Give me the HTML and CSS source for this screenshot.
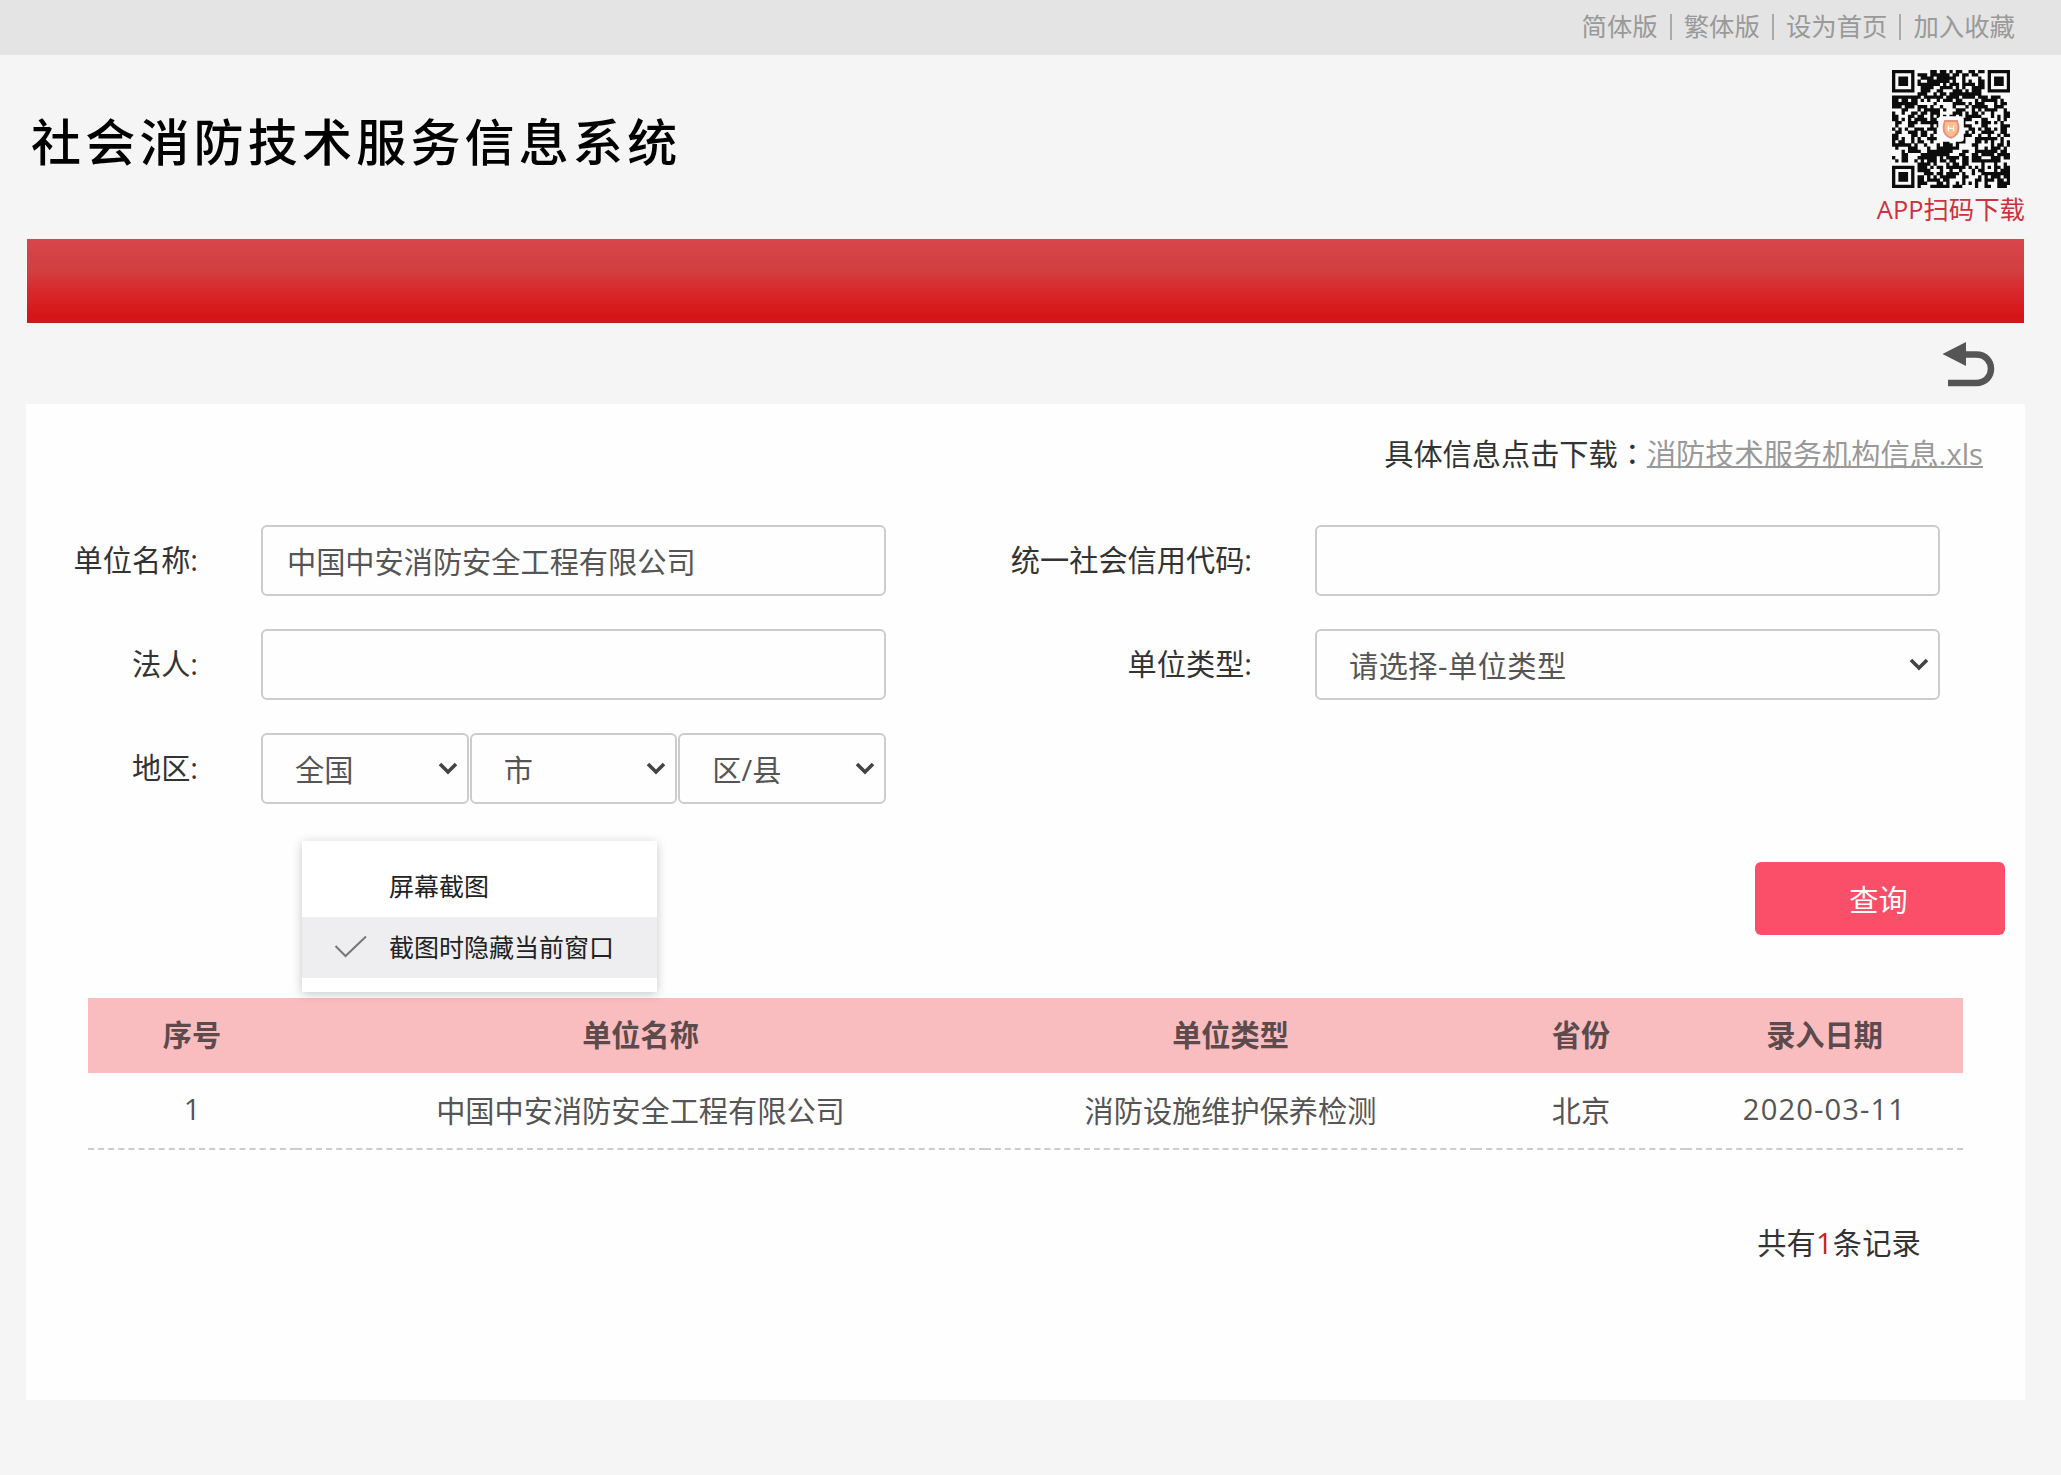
FILE: index.html
```
<!DOCTYPE html>
<html lang="zh-CN">
<head>
    <meta charset="UTF-8">
    <meta name="viewport" content="width=device-width, initial-scale=1.0">
    <title>社会消防技术服务信息系统</title>
    <link rel="stylesheet" href="styles.css">
</head>
<body>
    <div class="top-bar">
        <a>简体版</a><i></i><a>繁体版</a><i></i><a>设为首页</a><i></i><a>加入收藏</a>
    </div>

    <div class="header">
        <h1>社会消防技术服务信息系统</h1>
        <div class="app-code">
            <svg class="qr" id="qr" viewBox="0 0 37 37"></svg>
            <span>APP扫码下载</span>
        </div>
    </div>

    <div class="nav"></div>

    <div class="back">
        <svg width="54" height="46" viewBox="0 0 54 46">
            <path d="M0.500 12 L24 0 V24 Z" fill="#555"/>
            <path d="M22 12.500 H34 C54 12.500 54 41 34 41 H6" fill="none" stroke="#555" stroke-width="6.500"/>
        </svg>
    </div>

    <div class="panel">
        <div class="download">具体信息点击下载<span class="colon" lang="zh-TW">：</span><a>消防技术服务机构信息.xls</a></div>

        <form class="search">
            <div class="row">
                <label class="left">单位名称:</label>
                <div class="field">中国中安消防安全工程有限公司</div>
                <label class="right">统一社会信用代码:</label>
                <div class="field"></div>
            </div>
            <div class="row">
                <label class="left">法人:</label>
                <div class="field"></div>
                <label class="right">单位类型:</label>
                <div class="field select type">请选择-单位类型<svg class="arrow" viewBox="0 0 20 13"><path d="M2 2 L10 10 L18 2"/></svg></div>
            </div>
            <div class="row">
                <label class="left">地区:</label>
                <div class="area">
                    <div class="field select">全国<svg class="arrow" viewBox="0 0 20 13"><path d="M2 2 L10 10 L18 2"/></svg></div>
                    <div class="field select">市<svg class="arrow" viewBox="0 0 20 13"><path d="M2 2 L10 10 L18 2"/></svg></div>
                    <div class="field select">区/县<svg class="arrow" viewBox="0 0 20 13"><path d="M2 2 L10 10 L18 2"/></svg></div>
                </div>
            </div>
            <button type="button">查询</button>
        </form>

        <table>
            <thead>
                <tr>
                    <th class="c1">序号</th>
                    <th class="c2">单位名称</th>
                    <th class="c3">单位类型</th>
                    <th class="c4">省份</th>
                    <th class="c5">录入日期</th>
                </tr>
            </thead>
            <tbody>
                <tr>
                    <td>1</td>
                    <td>中国中安消防安全工程有限公司</td>
                    <td>消防设施维护保养检测</td>
                    <td>北京</td>
                    <td class="date">2020-03-11</td>
                </tr>
            </tbody>
        </table>

        <div class="total">共有<b>1</b>条记录</div>
    </div>

    <div class="menu">
        <div class="menu-item">屏幕截图</div>
        <div class="menu-item checked">
            <svg width="34" height="24" viewBox="0 0 34 24"><path d="M1.500 11 L11.500 21 L32 1.500" fill="none" stroke="#777" stroke-width="2"/></svg>
            截图时隐藏当前窗口
        </div>
    </div>

    <script src="qr.js"></script>
</body>
</html>
```

FILE: styles.css
```
* {
    box-sizing: border-box;
}

body {
    margin: 0;
    height: 1475px;
    position: relative;
    overflow: hidden;
    background: #f5f5f5;
    font-family: "Open Sans", "Noto Sans CJK SC", sans-serif;
    font-size: 29.2px;
    color: #333;
}

.top-bar {
    height: 55px;
    padding: 0 46px 3px 0;
    display: flex;
    align-items: center;
    justify-content: flex-end;
    background: #e4e4e4;
    font-size: 25.4px;
    line-height: 52px;
    color: #999;
}

.top-bar i {
    width: 2px;
    height: 26px;
    margin: 2px 12px 0;
    background: #aaa;
}

.header {
    height: 184px;
    padding: 0 36px 0 31px;
    display: flex;
    justify-content: space-between;
}

.header h1 {
    margin: 50px 0 0;
    font-size: 50px;
    line-height: 74px;
    font-weight: 500;
    letter-spacing: 4.2px;
    color: #000;
}

.app-code {
    padding-top: 15px;
    display: flex;
    flex-direction: column;
    align-items: center;
    font-size: 25.4px;
    line-height: 42px;
    color: #cf3040;
}

.qr {
    width: 118px;
    height: 118px;
    display: block;
}

.nav {
    height: 84px;
    margin: 0 37px 0 27px;
    background: linear-gradient(#d8454c 0%, #d23f40 38%, #d92a2e 60%, #d71416 92%, #c91a1c 100%);
}

.back {
    height: 81px;
    padding: 19px 65px 0 0;
    display: flex;
    justify-content: flex-end;
}

.panel {
    height: 996px;
    margin: 0 36px 0 26px;
    background: #fefefe;
}

.download {
    height: 121px;
    padding: 19px 42px 0 0;
    text-align: right;
    line-height: 58px;
}

/* the TC face centres the full-width colon */
.colon {
    font-family: "Noto Sans CJK TC", sans-serif;
}

.download a {
    color: #999;
    text-decoration: underline;
    text-decoration-thickness: 2px;
}

.search {
    display: flex;
    flex-direction: column;
    gap: 33px;
}

.row {
    height: 71px;
    display: flex;
    align-items: center;
}

.row label {
    text-align: right;
    line-height: 71px;
}

.row .left {
    width: 172px;
    margin-right: 63px;
}

.row .right {
    width: 366px;
    margin-right: 63px;
}

.field {
    width: 625px;
    height: 71px;
    padding: 2px 0 0 24px;
    border: 2px solid #ccc;
    border-radius: 6px;
    background: #fefefe;
    color: #555;
    line-height: 66px;
}

.field.select {
    padding: 3px 9px 0 32px;
    display: flex;
    align-items: center;
    justify-content: space-between;
}

.field.type {
    letter-spacing: 0.5px;
}

.arrow {
    width: 20px;
    height: 13px;
    margin-top: -3px;
    fill: none;
    stroke: #444;
    stroke-width: 3.6;
}

.area {
    width: 625px;
    display: flex;
    gap: 1px;
}

.area .field {
    flex: 1;
}

.search button {
    width: 250px;
    height: 73px;
    margin: 25px 20px 0 0;
    padding: 0 3px 0 0;
    align-self: flex-end;
    border: none;
    border-radius: 6px;
    background: #fb4e68;
    color: #fff;
    font: inherit;
}

table {
    width: 1875px;
    margin: 63px 0 0 62px;
    table-layout: fixed;
    border-collapse: collapse;
    color: #555;
    text-align: center;
}

th {
    height: 75px;
    padding: 0 0 4px;
    background: #f9bdc0;
    color: #5c4a4c;
    font-weight: 600;
}

td {
    height: 76px;
    padding: 0 0 3px;
    border-bottom: 2px dashed #ccc;
}

.c1 { width: 208px; }
.c2 { width: 689px; }
.c3 { width: 491px; }
.c4 { width: 210px; }
.c5 { width: 277px; }

.date {
    letter-spacing: 1.1px;
}

.total {
    margin: 71px 104px 0 0;
    text-align: right;
    line-height: 44px;
    letter-spacing: 0.2px;
}

.total b {
    color: #cc2222;
    font-weight: 400;
}

/* popup menu over the form */
.menu {
    position: absolute;
    left: 302px;
    top: 841px;
    width: 355px;
    height: 151px;
    padding-top: 15px;
    background: #fff;
    box-shadow: 0 2px 10px rgba(0, 0, 0, 0.22);
    font-size: 25px;
    color: #222;
}

.menu-item {
    height: 61px;
    padding-left: 87px;
    line-height: 60px;
}

.menu-item.checked {
    padding: 0 0 2px 32px;
    display: flex;
    align-items: center;
    gap: 21px;
    background: #eeedef;
}
```

FILE: qr.js
```
var size = 37;
var seed = 20200311;
var d = '';

function rand() {
    seed = (seed * 1103515245 + 12345) % 2147483648;
    return seed / 2147483648;
}

// rings of a finder or alignment square
function ring(x, y, cx, cy) {
    return Math.max(Math.abs(x - cx), Math.abs(y - cy));
}

for (var y = 0; y < size; y++) {
    for (var x = 0; x < size; x++) {
        var dark = rand() < 0.57;
        [[3, 3], [33, 3], [3, 33]].forEach(function (c) {
            var r = ring(x, y, c[0], c[1]);
            if (r <= 4) dark = r === 3 || r <= 1;
        });
        var a = ring(x, y, 30, 30);
        if (a <= 2) dark = a !== 1;
        if (ring(x, y, 18, 18) <= 3) dark = false;
        if (dark) d += 'M' + x + ' ' + y + 'h1.04v1.04h-1.04z';
    }
}

document.getElementById('qr').innerHTML =
    '<rect width="37" height="37" fill="#fafafa"/>' +
    '<path d="' + d + '" fill="#0c0c0c"/>' +
    '<rect x="14.500" y="14.500" width="8" height="8" rx="1" fill="#fff"/>' +
    '<path d="M16.600 16 H20.400 Q21.300 18.500 20.300 20 Q19.500 21 18.500 21.300 Q17.500 21 16.700 20 Q15.700 18.500 16.600 16 Z" fill="#f8c08a" stroke="#ee8d84" stroke-width="0.600"/>' +
    '<path d="M17.700 17.500 V19.200 M19.300 17.500 V19.200 M17.700 18.300 H19.300" stroke="#fff" stroke-width="0.400"/>';
```
